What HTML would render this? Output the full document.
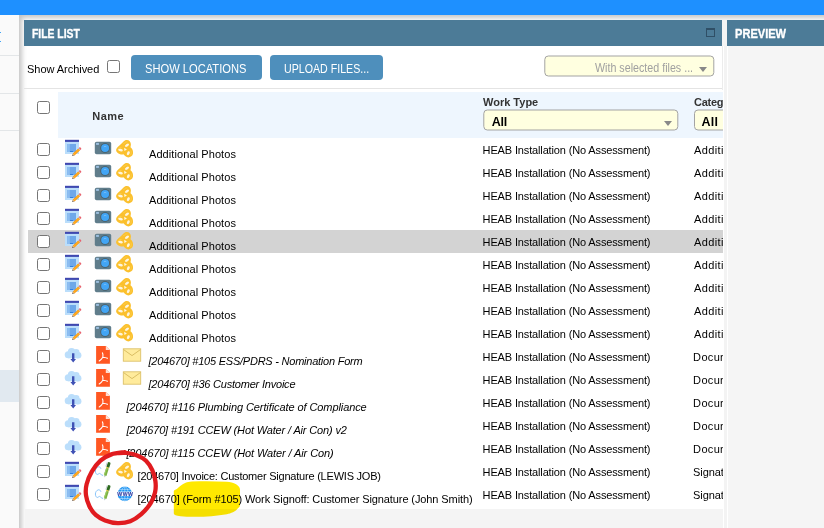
<!DOCTYPE html>
<html lang="en"><head><meta charset="utf-8"><title>File List</title>
<style>
html,body{margin:0;padding:0}
body{width:824px;height:528px;overflow:hidden;position:relative;background:#fff;font-family:"Liberation Sans",sans-serif;color:#000}
.abs{position:absolute}
.t{position:absolute;white-space:nowrap;display:block}
.ic{position:absolute;overflow:visible}
#topbar{left:0;top:0;width:824px;height:15px;background:#1e90ff}
#side{left:0;top:15px;width:19px;height:513px;background:#fafafa}
#side .ln{position:absolute;left:0;width:19px;height:1px;background:#e3e6e8}
#side .hi{position:absolute;left:0;top:355px;width:19px;height:32px;background:#e1e9f0}
#main{left:19px;top:15px;width:805px;height:513px;background:#fff;box-shadow:inset 4px 4px 5px -1px #c6c6c6}
.hdr{background:#4c7b97;height:26px;top:20px}
#p1h{left:24px;width:698px}
#p2h{left:727px;width:97px}
#p2b{left:728px;top:46px;width:96px;height:482px;background:#f5f5f5}
#gut{left:724px;top:46px;width:3px;height:482px;background:#f3f3f3}
#gut2{left:722px;top:20px;width:5px;height:26px;background:#f4f4f4}
#gutl{left:722px;top:46px;width:1px;height:44px;background:#ececec}
#sep{left:24px;top:88px;width:698px;height:1px;background:#e4e4e4}
#thbg{left:58px;top:92px;width:665px;height:46px;background:#eef6fe}
#below{left:25px;top:509px;width:698px;height:19px;background:#f4f4f4}
#clip{left:28px;top:90px;width:695px;height:419px;overflow:hidden}
#clip>*{margin-left:-28px;margin-top:-90px}
.cb{position:absolute;width:11px;height:11px;border:1px solid #767676;border-radius:2.5px;background:#fff}
.btn{position:absolute;top:55px;height:25px;background:#4e8fbc;border-radius:4px}
.sel{position:absolute;background:#ffffe0;border:1px solid #a3a3a3;border-radius:4px;box-sizing:border-box}
.arr{position:absolute;width:0;height:0;border-left:4px solid transparent;border-right:4px solid transparent;border-top:5px solid #888}
#hl{left:28px;top:230px;width:695px;height:23px;background:#d3d3d3}
</style></head><body>


<div id="topbar" class="abs"></div>
<div id="side" class="abs"><div class="ln" style="top:40px"></div><div class="ln" style="top:78px"></div><div class="ln" style="top:115px"></div><div class="hi"></div><div style="position:absolute;left:0;top:17px;width:1.2px;height:1.2px;background:#42a5f5"></div><div style="position:absolute;left:0;top:26px;width:1.2px;height:1.2px;background:#42a5f5"></div></div>
<div id="main" class="abs"></div>
<div id="p1h" class="abs hdr"></div><div id="p2h" class="abs hdr"></div><div id="p2b" class="abs"></div><div id="gut" class="abs"></div><div id="gut2" class="abs"></div><div id="gutl" class="abs"></div>
<svg class="ic" style="left:706px;top:28px" width="9" height="9" viewBox="0 0 9 9"><rect x="0.5" y="1" width="8" height="7.5" fill="none" stroke="#2f4f66" stroke-width="1"/><rect x="0" y="0" width="9" height="2" fill="#2f4f66"/></svg>
<div id="sep" class="abs"></div><div id="below" class="abs"></div>
<div class="cb" style="left:107px;top:60px"></div>
<div class="btn" style="left:131px;width:131px"></div><div class="btn" style="left:270px;width:113px"></div>
<div class="sel" style="left:544px;top:55px;width:169.5px;height:21px;transform:translate(0.3px,0.5px)"></div><div class="arr" style="left:699px;top:67px"></div>
<div id="clip" class="abs"><div style="position:absolute;left:0;top:0">
<div id="thbg" class="abs"></div><div id="hl" class="abs"></div>
<div class="cb" style="left:37px;top:101px"></div>
<div class="sel" style="left:483px;top:109px;width:195.2px;height:21px;transform:translate(0.3px,0.5px)"></div><div class="arr" style="left:664px;top:121px"></div>
<div class="sel" style="left:694px;top:109px;width:120px;height:21px;transform:translate(0,0.5px)"></div>
<div class="cb" style="left:37px;top:143px"></div>
<svg class="ic" style="left:65px;top:140px" width="16" height="16" viewBox="0 0 16 16"><rect x="0" y="0" width="14" height="14" fill="#bbdefb"/><rect x="0" y="-0.2" width="14" height="2.1" fill="#3f48b0"/><rect x="2.2" y="4" width="8.8" height="8" fill="#6ea8ea"/><rect x="2.2" y="4" width="2.6" height="8" fill="#8dbdf0"/><rect x="5" y="11" width="3" height="1" fill="#2f7fe0"/><g transform="translate(7.1,16) rotate(-43)"><path d="M0 0 L2.4 -1.3 L2.4 1.3 Z" fill="#5d4a3a"/><path d="M1.4 -0.76 L2.4 -1.3 L2.4 1.3 L1.4 0.76 Z" fill="#f7c98a"/><rect x="2.4" y="-1.3" width="7.3" height="2.6" fill="#ff9800"/><rect x="2.4" y="-0.45" width="7.3" height="0.9" fill="#ffb030"/><rect x="9.7" y="-1.3" width="0.6" height="2.6" fill="#b0bec5"/><path d="M10.3 -1.3 H11 A1 1.3 0 0 1 11 1.3 H10.3 Z" fill="#e8636f"/></g></svg>
<svg class="ic" style="left:95px;top:140px" width="16" height="16" viewBox="0 0 16 16"><rect x="-0.2" y="1.7" width="16.4" height="12.5" rx="1.8" fill="#607d8b"/><rect x="1.1" y="2.9" width="2.8" height="2" fill="#9ec0e0"/><circle cx="10.1" cy="8" r="4.8" fill="#455a64"/><circle cx="10.1" cy="8" r="4" fill="#42a5f5"/><path d="M8.8 6.9 A1.9 1.9 0 0 1 11.4 6.9" fill="none" stroke="#a6d4fa" stroke-width="0.5"/></svg>
<svg class="ic" style="left:117px;top:140px" width="16" height="16" viewBox="0 0 16 16"><path d="M-0.9 10.1 C-0.6 8.6 0 7.6 1 6.75 L4.3 3.8 L6.8 1.3 C7.8 0.4 8.7 0.1 9.75 0.1 C11 0.1 12 0.5 12.7 1.3 C13.5 2.2 13.9 3.2 13.9 4.25 C13.9 5.4 13.7 6.3 13.5 7.2 C14.5 8 15.2 9 15.6 10.1 C16 11.2 16.1 12.3 16 13.4 C15.8 14.6 15.2 15.6 14.3 16.3 C13.4 17 12.5 17.4 11.4 17.4 C10.3 17.4 9.3 17 8.5 16.3 C7.7 15.6 7 15 6.4 14.25 C5.3 14.6 4.2 14.6 3.1 14.25 C1.9 13.9 0.9 13.4 0.2 12.6 C-0.6 11.8 -1 11 -0.9 10.1 Z" fill="#fbc02d"/><g fill="#fff" opacity="0.85"><ellipse cx="10" cy="5.2" rx="2.3" ry="1.25" transform="rotate(-35 10 5.2)"/><ellipse cx="3.5" cy="10.1" rx="2.4" ry="1.3" transform="rotate(12 3.5 10.1)"/><ellipse cx="11.3" cy="13.2" rx="1.3" ry="2.1" transform="rotate(25 11.3 13.2)"/><path d="M7.2 7.8 L9.9 9.5 L7.4 10.9 Z" opacity="1"/></g><g fill="none" stroke="#fdd663" stroke-width="0.6" opacity="0.9"><path d="M6.5 4 C7.5 2.5 9 1.8 10.5 2"/><path d="M0.8 9.5 C1.5 8 3 7.3 4.5 7.5"/><path d="M13.8 10.5 C14.6 12 14.4 14 13.4 15"/></g></svg>
<div class="cb" style="left:37px;top:166px"></div>
<svg class="ic" style="left:65px;top:163px" width="16" height="16" viewBox="0 0 16 16"><rect x="0" y="0" width="14" height="14" fill="#bbdefb"/><rect x="0" y="-0.2" width="14" height="2.1" fill="#3f48b0"/><rect x="2.2" y="4" width="8.8" height="8" fill="#6ea8ea"/><rect x="2.2" y="4" width="2.6" height="8" fill="#8dbdf0"/><rect x="5" y="11" width="3" height="1" fill="#2f7fe0"/><g transform="translate(7.1,16) rotate(-43)"><path d="M0 0 L2.4 -1.3 L2.4 1.3 Z" fill="#5d4a3a"/><path d="M1.4 -0.76 L2.4 -1.3 L2.4 1.3 L1.4 0.76 Z" fill="#f7c98a"/><rect x="2.4" y="-1.3" width="7.3" height="2.6" fill="#ff9800"/><rect x="2.4" y="-0.45" width="7.3" height="0.9" fill="#ffb030"/><rect x="9.7" y="-1.3" width="0.6" height="2.6" fill="#b0bec5"/><path d="M10.3 -1.3 H11 A1 1.3 0 0 1 11 1.3 H10.3 Z" fill="#e8636f"/></g></svg>
<svg class="ic" style="left:95px;top:163px" width="16" height="16" viewBox="0 0 16 16"><rect x="-0.2" y="1.7" width="16.4" height="12.5" rx="1.8" fill="#607d8b"/><rect x="1.1" y="2.9" width="2.8" height="2" fill="#9ec0e0"/><circle cx="10.1" cy="8" r="4.8" fill="#455a64"/><circle cx="10.1" cy="8" r="4" fill="#42a5f5"/><path d="M8.8 6.9 A1.9 1.9 0 0 1 11.4 6.9" fill="none" stroke="#a6d4fa" stroke-width="0.5"/></svg>
<svg class="ic" style="left:117px;top:163px" width="16" height="16" viewBox="0 0 16 16"><path d="M-0.9 10.1 C-0.6 8.6 0 7.6 1 6.75 L4.3 3.8 L6.8 1.3 C7.8 0.4 8.7 0.1 9.75 0.1 C11 0.1 12 0.5 12.7 1.3 C13.5 2.2 13.9 3.2 13.9 4.25 C13.9 5.4 13.7 6.3 13.5 7.2 C14.5 8 15.2 9 15.6 10.1 C16 11.2 16.1 12.3 16 13.4 C15.8 14.6 15.2 15.6 14.3 16.3 C13.4 17 12.5 17.4 11.4 17.4 C10.3 17.4 9.3 17 8.5 16.3 C7.7 15.6 7 15 6.4 14.25 C5.3 14.6 4.2 14.6 3.1 14.25 C1.9 13.9 0.9 13.4 0.2 12.6 C-0.6 11.8 -1 11 -0.9 10.1 Z" fill="#fbc02d"/><g fill="#fff" opacity="0.85"><ellipse cx="10" cy="5.2" rx="2.3" ry="1.25" transform="rotate(-35 10 5.2)"/><ellipse cx="3.5" cy="10.1" rx="2.4" ry="1.3" transform="rotate(12 3.5 10.1)"/><ellipse cx="11.3" cy="13.2" rx="1.3" ry="2.1" transform="rotate(25 11.3 13.2)"/><path d="M7.2 7.8 L9.9 9.5 L7.4 10.9 Z" opacity="1"/></g><g fill="none" stroke="#fdd663" stroke-width="0.6" opacity="0.9"><path d="M6.5 4 C7.5 2.5 9 1.8 10.5 2"/><path d="M0.8 9.5 C1.5 8 3 7.3 4.5 7.5"/><path d="M13.8 10.5 C14.6 12 14.4 14 13.4 15"/></g></svg>
<div class="cb" style="left:37px;top:189px"></div>
<svg class="ic" style="left:65px;top:186px" width="16" height="16" viewBox="0 0 16 16"><rect x="0" y="0" width="14" height="14" fill="#bbdefb"/><rect x="0" y="-0.2" width="14" height="2.1" fill="#3f48b0"/><rect x="2.2" y="4" width="8.8" height="8" fill="#6ea8ea"/><rect x="2.2" y="4" width="2.6" height="8" fill="#8dbdf0"/><rect x="5" y="11" width="3" height="1" fill="#2f7fe0"/><g transform="translate(7.1,16) rotate(-43)"><path d="M0 0 L2.4 -1.3 L2.4 1.3 Z" fill="#5d4a3a"/><path d="M1.4 -0.76 L2.4 -1.3 L2.4 1.3 L1.4 0.76 Z" fill="#f7c98a"/><rect x="2.4" y="-1.3" width="7.3" height="2.6" fill="#ff9800"/><rect x="2.4" y="-0.45" width="7.3" height="0.9" fill="#ffb030"/><rect x="9.7" y="-1.3" width="0.6" height="2.6" fill="#b0bec5"/><path d="M10.3 -1.3 H11 A1 1.3 0 0 1 11 1.3 H10.3 Z" fill="#e8636f"/></g></svg>
<svg class="ic" style="left:95px;top:186px" width="16" height="16" viewBox="0 0 16 16"><rect x="-0.2" y="1.7" width="16.4" height="12.5" rx="1.8" fill="#607d8b"/><rect x="1.1" y="2.9" width="2.8" height="2" fill="#9ec0e0"/><circle cx="10.1" cy="8" r="4.8" fill="#455a64"/><circle cx="10.1" cy="8" r="4" fill="#42a5f5"/><path d="M8.8 6.9 A1.9 1.9 0 0 1 11.4 6.9" fill="none" stroke="#a6d4fa" stroke-width="0.5"/></svg>
<svg class="ic" style="left:117px;top:186px" width="16" height="16" viewBox="0 0 16 16"><path d="M-0.9 10.1 C-0.6 8.6 0 7.6 1 6.75 L4.3 3.8 L6.8 1.3 C7.8 0.4 8.7 0.1 9.75 0.1 C11 0.1 12 0.5 12.7 1.3 C13.5 2.2 13.9 3.2 13.9 4.25 C13.9 5.4 13.7 6.3 13.5 7.2 C14.5 8 15.2 9 15.6 10.1 C16 11.2 16.1 12.3 16 13.4 C15.8 14.6 15.2 15.6 14.3 16.3 C13.4 17 12.5 17.4 11.4 17.4 C10.3 17.4 9.3 17 8.5 16.3 C7.7 15.6 7 15 6.4 14.25 C5.3 14.6 4.2 14.6 3.1 14.25 C1.9 13.9 0.9 13.4 0.2 12.6 C-0.6 11.8 -1 11 -0.9 10.1 Z" fill="#fbc02d"/><g fill="#fff" opacity="0.85"><ellipse cx="10" cy="5.2" rx="2.3" ry="1.25" transform="rotate(-35 10 5.2)"/><ellipse cx="3.5" cy="10.1" rx="2.4" ry="1.3" transform="rotate(12 3.5 10.1)"/><ellipse cx="11.3" cy="13.2" rx="1.3" ry="2.1" transform="rotate(25 11.3 13.2)"/><path d="M7.2 7.8 L9.9 9.5 L7.4 10.9 Z" opacity="1"/></g><g fill="none" stroke="#fdd663" stroke-width="0.6" opacity="0.9"><path d="M6.5 4 C7.5 2.5 9 1.8 10.5 2"/><path d="M0.8 9.5 C1.5 8 3 7.3 4.5 7.5"/><path d="M13.8 10.5 C14.6 12 14.4 14 13.4 15"/></g></svg>
<div class="cb" style="left:37px;top:212px"></div>
<svg class="ic" style="left:65px;top:209px" width="16" height="16" viewBox="0 0 16 16"><rect x="0" y="0" width="14" height="14" fill="#bbdefb"/><rect x="0" y="-0.2" width="14" height="2.1" fill="#3f48b0"/><rect x="2.2" y="4" width="8.8" height="8" fill="#6ea8ea"/><rect x="2.2" y="4" width="2.6" height="8" fill="#8dbdf0"/><rect x="5" y="11" width="3" height="1" fill="#2f7fe0"/><g transform="translate(7.1,16) rotate(-43)"><path d="M0 0 L2.4 -1.3 L2.4 1.3 Z" fill="#5d4a3a"/><path d="M1.4 -0.76 L2.4 -1.3 L2.4 1.3 L1.4 0.76 Z" fill="#f7c98a"/><rect x="2.4" y="-1.3" width="7.3" height="2.6" fill="#ff9800"/><rect x="2.4" y="-0.45" width="7.3" height="0.9" fill="#ffb030"/><rect x="9.7" y="-1.3" width="0.6" height="2.6" fill="#b0bec5"/><path d="M10.3 -1.3 H11 A1 1.3 0 0 1 11 1.3 H10.3 Z" fill="#e8636f"/></g></svg>
<svg class="ic" style="left:95px;top:209px" width="16" height="16" viewBox="0 0 16 16"><rect x="-0.2" y="1.7" width="16.4" height="12.5" rx="1.8" fill="#607d8b"/><rect x="1.1" y="2.9" width="2.8" height="2" fill="#9ec0e0"/><circle cx="10.1" cy="8" r="4.8" fill="#455a64"/><circle cx="10.1" cy="8" r="4" fill="#42a5f5"/><path d="M8.8 6.9 A1.9 1.9 0 0 1 11.4 6.9" fill="none" stroke="#a6d4fa" stroke-width="0.5"/></svg>
<svg class="ic" style="left:117px;top:209px" width="16" height="16" viewBox="0 0 16 16"><path d="M-0.9 10.1 C-0.6 8.6 0 7.6 1 6.75 L4.3 3.8 L6.8 1.3 C7.8 0.4 8.7 0.1 9.75 0.1 C11 0.1 12 0.5 12.7 1.3 C13.5 2.2 13.9 3.2 13.9 4.25 C13.9 5.4 13.7 6.3 13.5 7.2 C14.5 8 15.2 9 15.6 10.1 C16 11.2 16.1 12.3 16 13.4 C15.8 14.6 15.2 15.6 14.3 16.3 C13.4 17 12.5 17.4 11.4 17.4 C10.3 17.4 9.3 17 8.5 16.3 C7.7 15.6 7 15 6.4 14.25 C5.3 14.6 4.2 14.6 3.1 14.25 C1.9 13.9 0.9 13.4 0.2 12.6 C-0.6 11.8 -1 11 -0.9 10.1 Z" fill="#fbc02d"/><g fill="#fff" opacity="0.85"><ellipse cx="10" cy="5.2" rx="2.3" ry="1.25" transform="rotate(-35 10 5.2)"/><ellipse cx="3.5" cy="10.1" rx="2.4" ry="1.3" transform="rotate(12 3.5 10.1)"/><ellipse cx="11.3" cy="13.2" rx="1.3" ry="2.1" transform="rotate(25 11.3 13.2)"/><path d="M7.2 7.8 L9.9 9.5 L7.4 10.9 Z" opacity="1"/></g><g fill="none" stroke="#fdd663" stroke-width="0.6" opacity="0.9"><path d="M6.5 4 C7.5 2.5 9 1.8 10.5 2"/><path d="M0.8 9.5 C1.5 8 3 7.3 4.5 7.5"/><path d="M13.8 10.5 C14.6 12 14.4 14 13.4 15"/></g></svg>
<div class="cb" style="left:37px;top:235px"></div>
<svg class="ic" style="left:65px;top:232px" width="16" height="16" viewBox="0 0 16 16"><rect x="0" y="0" width="14" height="14" fill="#bbdefb"/><rect x="0" y="-0.2" width="14" height="2.1" fill="#3f48b0"/><rect x="2.2" y="4" width="8.8" height="8" fill="#6ea8ea"/><rect x="2.2" y="4" width="2.6" height="8" fill="#8dbdf0"/><rect x="5" y="11" width="3" height="1" fill="#2f7fe0"/><g transform="translate(7.1,16) rotate(-43)"><path d="M0 0 L2.4 -1.3 L2.4 1.3 Z" fill="#5d4a3a"/><path d="M1.4 -0.76 L2.4 -1.3 L2.4 1.3 L1.4 0.76 Z" fill="#f7c98a"/><rect x="2.4" y="-1.3" width="7.3" height="2.6" fill="#ff9800"/><rect x="2.4" y="-0.45" width="7.3" height="0.9" fill="#ffb030"/><rect x="9.7" y="-1.3" width="0.6" height="2.6" fill="#b0bec5"/><path d="M10.3 -1.3 H11 A1 1.3 0 0 1 11 1.3 H10.3 Z" fill="#e8636f"/></g></svg>
<svg class="ic" style="left:95px;top:232px" width="16" height="16" viewBox="0 0 16 16"><rect x="-0.2" y="1.7" width="16.4" height="12.5" rx="1.8" fill="#607d8b"/><rect x="1.1" y="2.9" width="2.8" height="2" fill="#9ec0e0"/><circle cx="10.1" cy="8" r="4.8" fill="#455a64"/><circle cx="10.1" cy="8" r="4" fill="#42a5f5"/><path d="M8.8 6.9 A1.9 1.9 0 0 1 11.4 6.9" fill="none" stroke="#a6d4fa" stroke-width="0.5"/></svg>
<svg class="ic" style="left:117px;top:232px" width="16" height="16" viewBox="0 0 16 16"><path d="M-0.9 10.1 C-0.6 8.6 0 7.6 1 6.75 L4.3 3.8 L6.8 1.3 C7.8 0.4 8.7 0.1 9.75 0.1 C11 0.1 12 0.5 12.7 1.3 C13.5 2.2 13.9 3.2 13.9 4.25 C13.9 5.4 13.7 6.3 13.5 7.2 C14.5 8 15.2 9 15.6 10.1 C16 11.2 16.1 12.3 16 13.4 C15.8 14.6 15.2 15.6 14.3 16.3 C13.4 17 12.5 17.4 11.4 17.4 C10.3 17.4 9.3 17 8.5 16.3 C7.7 15.6 7 15 6.4 14.25 C5.3 14.6 4.2 14.6 3.1 14.25 C1.9 13.9 0.9 13.4 0.2 12.6 C-0.6 11.8 -1 11 -0.9 10.1 Z" fill="#fbc02d"/><g fill="#fff" opacity="0.85"><ellipse cx="10" cy="5.2" rx="2.3" ry="1.25" transform="rotate(-35 10 5.2)"/><ellipse cx="3.5" cy="10.1" rx="2.4" ry="1.3" transform="rotate(12 3.5 10.1)"/><ellipse cx="11.3" cy="13.2" rx="1.3" ry="2.1" transform="rotate(25 11.3 13.2)"/><path d="M7.2 7.8 L9.9 9.5 L7.4 10.9 Z" opacity="1"/></g><g fill="none" stroke="#fdd663" stroke-width="0.6" opacity="0.9"><path d="M6.5 4 C7.5 2.5 9 1.8 10.5 2"/><path d="M0.8 9.5 C1.5 8 3 7.3 4.5 7.5"/><path d="M13.8 10.5 C14.6 12 14.4 14 13.4 15"/></g></svg>
<div class="cb" style="left:37px;top:258px"></div>
<svg class="ic" style="left:65px;top:255px" width="16" height="16" viewBox="0 0 16 16"><rect x="0" y="0" width="14" height="14" fill="#bbdefb"/><rect x="0" y="-0.2" width="14" height="2.1" fill="#3f48b0"/><rect x="2.2" y="4" width="8.8" height="8" fill="#6ea8ea"/><rect x="2.2" y="4" width="2.6" height="8" fill="#8dbdf0"/><rect x="5" y="11" width="3" height="1" fill="#2f7fe0"/><g transform="translate(7.1,16) rotate(-43)"><path d="M0 0 L2.4 -1.3 L2.4 1.3 Z" fill="#5d4a3a"/><path d="M1.4 -0.76 L2.4 -1.3 L2.4 1.3 L1.4 0.76 Z" fill="#f7c98a"/><rect x="2.4" y="-1.3" width="7.3" height="2.6" fill="#ff9800"/><rect x="2.4" y="-0.45" width="7.3" height="0.9" fill="#ffb030"/><rect x="9.7" y="-1.3" width="0.6" height="2.6" fill="#b0bec5"/><path d="M10.3 -1.3 H11 A1 1.3 0 0 1 11 1.3 H10.3 Z" fill="#e8636f"/></g></svg>
<svg class="ic" style="left:95px;top:255px" width="16" height="16" viewBox="0 0 16 16"><rect x="-0.2" y="1.7" width="16.4" height="12.5" rx="1.8" fill="#607d8b"/><rect x="1.1" y="2.9" width="2.8" height="2" fill="#9ec0e0"/><circle cx="10.1" cy="8" r="4.8" fill="#455a64"/><circle cx="10.1" cy="8" r="4" fill="#42a5f5"/><path d="M8.8 6.9 A1.9 1.9 0 0 1 11.4 6.9" fill="none" stroke="#a6d4fa" stroke-width="0.5"/></svg>
<svg class="ic" style="left:117px;top:255px" width="16" height="16" viewBox="0 0 16 16"><path d="M-0.9 10.1 C-0.6 8.6 0 7.6 1 6.75 L4.3 3.8 L6.8 1.3 C7.8 0.4 8.7 0.1 9.75 0.1 C11 0.1 12 0.5 12.7 1.3 C13.5 2.2 13.9 3.2 13.9 4.25 C13.9 5.4 13.7 6.3 13.5 7.2 C14.5 8 15.2 9 15.6 10.1 C16 11.2 16.1 12.3 16 13.4 C15.8 14.6 15.2 15.6 14.3 16.3 C13.4 17 12.5 17.4 11.4 17.4 C10.3 17.4 9.3 17 8.5 16.3 C7.7 15.6 7 15 6.4 14.25 C5.3 14.6 4.2 14.6 3.1 14.25 C1.9 13.9 0.9 13.4 0.2 12.6 C-0.6 11.8 -1 11 -0.9 10.1 Z" fill="#fbc02d"/><g fill="#fff" opacity="0.85"><ellipse cx="10" cy="5.2" rx="2.3" ry="1.25" transform="rotate(-35 10 5.2)"/><ellipse cx="3.5" cy="10.1" rx="2.4" ry="1.3" transform="rotate(12 3.5 10.1)"/><ellipse cx="11.3" cy="13.2" rx="1.3" ry="2.1" transform="rotate(25 11.3 13.2)"/><path d="M7.2 7.8 L9.9 9.5 L7.4 10.9 Z" opacity="1"/></g><g fill="none" stroke="#fdd663" stroke-width="0.6" opacity="0.9"><path d="M6.5 4 C7.5 2.5 9 1.8 10.5 2"/><path d="M0.8 9.5 C1.5 8 3 7.3 4.5 7.5"/><path d="M13.8 10.5 C14.6 12 14.4 14 13.4 15"/></g></svg>
<div class="cb" style="left:37px;top:281px"></div>
<svg class="ic" style="left:65px;top:278px" width="16" height="16" viewBox="0 0 16 16"><rect x="0" y="0" width="14" height="14" fill="#bbdefb"/><rect x="0" y="-0.2" width="14" height="2.1" fill="#3f48b0"/><rect x="2.2" y="4" width="8.8" height="8" fill="#6ea8ea"/><rect x="2.2" y="4" width="2.6" height="8" fill="#8dbdf0"/><rect x="5" y="11" width="3" height="1" fill="#2f7fe0"/><g transform="translate(7.1,16) rotate(-43)"><path d="M0 0 L2.4 -1.3 L2.4 1.3 Z" fill="#5d4a3a"/><path d="M1.4 -0.76 L2.4 -1.3 L2.4 1.3 L1.4 0.76 Z" fill="#f7c98a"/><rect x="2.4" y="-1.3" width="7.3" height="2.6" fill="#ff9800"/><rect x="2.4" y="-0.45" width="7.3" height="0.9" fill="#ffb030"/><rect x="9.7" y="-1.3" width="0.6" height="2.6" fill="#b0bec5"/><path d="M10.3 -1.3 H11 A1 1.3 0 0 1 11 1.3 H10.3 Z" fill="#e8636f"/></g></svg>
<svg class="ic" style="left:95px;top:278px" width="16" height="16" viewBox="0 0 16 16"><rect x="-0.2" y="1.7" width="16.4" height="12.5" rx="1.8" fill="#607d8b"/><rect x="1.1" y="2.9" width="2.8" height="2" fill="#9ec0e0"/><circle cx="10.1" cy="8" r="4.8" fill="#455a64"/><circle cx="10.1" cy="8" r="4" fill="#42a5f5"/><path d="M8.8 6.9 A1.9 1.9 0 0 1 11.4 6.9" fill="none" stroke="#a6d4fa" stroke-width="0.5"/></svg>
<svg class="ic" style="left:117px;top:278px" width="16" height="16" viewBox="0 0 16 16"><path d="M-0.9 10.1 C-0.6 8.6 0 7.6 1 6.75 L4.3 3.8 L6.8 1.3 C7.8 0.4 8.7 0.1 9.75 0.1 C11 0.1 12 0.5 12.7 1.3 C13.5 2.2 13.9 3.2 13.9 4.25 C13.9 5.4 13.7 6.3 13.5 7.2 C14.5 8 15.2 9 15.6 10.1 C16 11.2 16.1 12.3 16 13.4 C15.8 14.6 15.2 15.6 14.3 16.3 C13.4 17 12.5 17.4 11.4 17.4 C10.3 17.4 9.3 17 8.5 16.3 C7.7 15.6 7 15 6.4 14.25 C5.3 14.6 4.2 14.6 3.1 14.25 C1.9 13.9 0.9 13.4 0.2 12.6 C-0.6 11.8 -1 11 -0.9 10.1 Z" fill="#fbc02d"/><g fill="#fff" opacity="0.85"><ellipse cx="10" cy="5.2" rx="2.3" ry="1.25" transform="rotate(-35 10 5.2)"/><ellipse cx="3.5" cy="10.1" rx="2.4" ry="1.3" transform="rotate(12 3.5 10.1)"/><ellipse cx="11.3" cy="13.2" rx="1.3" ry="2.1" transform="rotate(25 11.3 13.2)"/><path d="M7.2 7.8 L9.9 9.5 L7.4 10.9 Z" opacity="1"/></g><g fill="none" stroke="#fdd663" stroke-width="0.6" opacity="0.9"><path d="M6.5 4 C7.5 2.5 9 1.8 10.5 2"/><path d="M0.8 9.5 C1.5 8 3 7.3 4.5 7.5"/><path d="M13.8 10.5 C14.6 12 14.4 14 13.4 15"/></g></svg>
<div class="cb" style="left:37px;top:304px"></div>
<svg class="ic" style="left:65px;top:301px" width="16" height="16" viewBox="0 0 16 16"><rect x="0" y="0" width="14" height="14" fill="#bbdefb"/><rect x="0" y="-0.2" width="14" height="2.1" fill="#3f48b0"/><rect x="2.2" y="4" width="8.8" height="8" fill="#6ea8ea"/><rect x="2.2" y="4" width="2.6" height="8" fill="#8dbdf0"/><rect x="5" y="11" width="3" height="1" fill="#2f7fe0"/><g transform="translate(7.1,16) rotate(-43)"><path d="M0 0 L2.4 -1.3 L2.4 1.3 Z" fill="#5d4a3a"/><path d="M1.4 -0.76 L2.4 -1.3 L2.4 1.3 L1.4 0.76 Z" fill="#f7c98a"/><rect x="2.4" y="-1.3" width="7.3" height="2.6" fill="#ff9800"/><rect x="2.4" y="-0.45" width="7.3" height="0.9" fill="#ffb030"/><rect x="9.7" y="-1.3" width="0.6" height="2.6" fill="#b0bec5"/><path d="M10.3 -1.3 H11 A1 1.3 0 0 1 11 1.3 H10.3 Z" fill="#e8636f"/></g></svg>
<svg class="ic" style="left:95px;top:301px" width="16" height="16" viewBox="0 0 16 16"><rect x="-0.2" y="1.7" width="16.4" height="12.5" rx="1.8" fill="#607d8b"/><rect x="1.1" y="2.9" width="2.8" height="2" fill="#9ec0e0"/><circle cx="10.1" cy="8" r="4.8" fill="#455a64"/><circle cx="10.1" cy="8" r="4" fill="#42a5f5"/><path d="M8.8 6.9 A1.9 1.9 0 0 1 11.4 6.9" fill="none" stroke="#a6d4fa" stroke-width="0.5"/></svg>
<svg class="ic" style="left:117px;top:301px" width="16" height="16" viewBox="0 0 16 16"><path d="M-0.9 10.1 C-0.6 8.6 0 7.6 1 6.75 L4.3 3.8 L6.8 1.3 C7.8 0.4 8.7 0.1 9.75 0.1 C11 0.1 12 0.5 12.7 1.3 C13.5 2.2 13.9 3.2 13.9 4.25 C13.9 5.4 13.7 6.3 13.5 7.2 C14.5 8 15.2 9 15.6 10.1 C16 11.2 16.1 12.3 16 13.4 C15.8 14.6 15.2 15.6 14.3 16.3 C13.4 17 12.5 17.4 11.4 17.4 C10.3 17.4 9.3 17 8.5 16.3 C7.7 15.6 7 15 6.4 14.25 C5.3 14.6 4.2 14.6 3.1 14.25 C1.9 13.9 0.9 13.4 0.2 12.6 C-0.6 11.8 -1 11 -0.9 10.1 Z" fill="#fbc02d"/><g fill="#fff" opacity="0.85"><ellipse cx="10" cy="5.2" rx="2.3" ry="1.25" transform="rotate(-35 10 5.2)"/><ellipse cx="3.5" cy="10.1" rx="2.4" ry="1.3" transform="rotate(12 3.5 10.1)"/><ellipse cx="11.3" cy="13.2" rx="1.3" ry="2.1" transform="rotate(25 11.3 13.2)"/><path d="M7.2 7.8 L9.9 9.5 L7.4 10.9 Z" opacity="1"/></g><g fill="none" stroke="#fdd663" stroke-width="0.6" opacity="0.9"><path d="M6.5 4 C7.5 2.5 9 1.8 10.5 2"/><path d="M0.8 9.5 C1.5 8 3 7.3 4.5 7.5"/><path d="M13.8 10.5 C14.6 12 14.4 14 13.4 15"/></g></svg>
<div class="cb" style="left:37px;top:327px"></div>
<svg class="ic" style="left:65px;top:324px" width="16" height="16" viewBox="0 0 16 16"><rect x="0" y="0" width="14" height="14" fill="#bbdefb"/><rect x="0" y="-0.2" width="14" height="2.1" fill="#3f48b0"/><rect x="2.2" y="4" width="8.8" height="8" fill="#6ea8ea"/><rect x="2.2" y="4" width="2.6" height="8" fill="#8dbdf0"/><rect x="5" y="11" width="3" height="1" fill="#2f7fe0"/><g transform="translate(7.1,16) rotate(-43)"><path d="M0 0 L2.4 -1.3 L2.4 1.3 Z" fill="#5d4a3a"/><path d="M1.4 -0.76 L2.4 -1.3 L2.4 1.3 L1.4 0.76 Z" fill="#f7c98a"/><rect x="2.4" y="-1.3" width="7.3" height="2.6" fill="#ff9800"/><rect x="2.4" y="-0.45" width="7.3" height="0.9" fill="#ffb030"/><rect x="9.7" y="-1.3" width="0.6" height="2.6" fill="#b0bec5"/><path d="M10.3 -1.3 H11 A1 1.3 0 0 1 11 1.3 H10.3 Z" fill="#e8636f"/></g></svg>
<svg class="ic" style="left:95px;top:324px" width="16" height="16" viewBox="0 0 16 16"><rect x="-0.2" y="1.7" width="16.4" height="12.5" rx="1.8" fill="#607d8b"/><rect x="1.1" y="2.9" width="2.8" height="2" fill="#9ec0e0"/><circle cx="10.1" cy="8" r="4.8" fill="#455a64"/><circle cx="10.1" cy="8" r="4" fill="#42a5f5"/><path d="M8.8 6.9 A1.9 1.9 0 0 1 11.4 6.9" fill="none" stroke="#a6d4fa" stroke-width="0.5"/></svg>
<svg class="ic" style="left:117px;top:324px" width="16" height="16" viewBox="0 0 16 16"><path d="M-0.9 10.1 C-0.6 8.6 0 7.6 1 6.75 L4.3 3.8 L6.8 1.3 C7.8 0.4 8.7 0.1 9.75 0.1 C11 0.1 12 0.5 12.7 1.3 C13.5 2.2 13.9 3.2 13.9 4.25 C13.9 5.4 13.7 6.3 13.5 7.2 C14.5 8 15.2 9 15.6 10.1 C16 11.2 16.1 12.3 16 13.4 C15.8 14.6 15.2 15.6 14.3 16.3 C13.4 17 12.5 17.4 11.4 17.4 C10.3 17.4 9.3 17 8.5 16.3 C7.7 15.6 7 15 6.4 14.25 C5.3 14.6 4.2 14.6 3.1 14.25 C1.9 13.9 0.9 13.4 0.2 12.6 C-0.6 11.8 -1 11 -0.9 10.1 Z" fill="#fbc02d"/><g fill="#fff" opacity="0.85"><ellipse cx="10" cy="5.2" rx="2.3" ry="1.25" transform="rotate(-35 10 5.2)"/><ellipse cx="3.5" cy="10.1" rx="2.4" ry="1.3" transform="rotate(12 3.5 10.1)"/><ellipse cx="11.3" cy="13.2" rx="1.3" ry="2.1" transform="rotate(25 11.3 13.2)"/><path d="M7.2 7.8 L9.9 9.5 L7.4 10.9 Z" opacity="1"/></g><g fill="none" stroke="#fdd663" stroke-width="0.6" opacity="0.9"><path d="M6.5 4 C7.5 2.5 9 1.8 10.5 2"/><path d="M0.8 9.5 C1.5 8 3 7.3 4.5 7.5"/><path d="M13.8 10.5 C14.6 12 14.4 14 13.4 15"/></g></svg>
<div class="cb" style="left:37px;top:350px"></div>
<svg class="ic" style="left:65px;top:347px" width="16" height="16" viewBox="0 0 16 16"><g fill="#bbdefb"><circle cx="3.2" cy="7.8" r="3.5"/><circle cx="6.6" cy="4.8" r="3.8"/><circle cx="11.2" cy="5.4" r="3.3"/><circle cx="13.2" cy="8.2" r="3.2"/><rect x="3.2" y="6" width="10" height="5.3"/></g><path d="M7 6.2 H9.4 V12 H11 L8.2 15.4 L5.4 12 H7 Z" fill="#3f51b5"/></svg>
<svg class="ic" style="left:96px;top:346px" width="14" height="18" viewBox="0 0 14 18"><path d="M0.1 0 H9.8 L13.9 4.1 V17.7 H0.1 Z" fill="#ff5722"/><path d="M9.8 0 L13.9 4.1 H9.8 Z" fill="#ffddd2"/><path d="M6.4 6.9 C7.4 8.5 6.9 10 6.8 11.2 M6.8 11.2 C6 12.6 4.8 14 3.2 14.9 M6.8 11.2 C8.5 11.3 10 11.5 11.4 12.3" fill="none" stroke="#fff" stroke-width="1.1" stroke-linecap="round"/></svg>
<svg class="ic" style="left:122px;top:348px" width="20" height="14" viewBox="0 0 20 14"><rect x="1.3" y="0.8" width="17.4" height="12.4" fill="#ffeb9c" stroke="#dcc06a" stroke-width="0.9"/><path d="M1.6 1.6 L10 7.6 L18.4 1.6" fill="none" stroke="#d6b95e" stroke-width="0.9"/></svg>
<div class="cb" style="left:37px;top:373px"></div>
<svg class="ic" style="left:65px;top:370px" width="16" height="16" viewBox="0 0 16 16"><g fill="#bbdefb"><circle cx="3.2" cy="7.8" r="3.5"/><circle cx="6.6" cy="4.8" r="3.8"/><circle cx="11.2" cy="5.4" r="3.3"/><circle cx="13.2" cy="8.2" r="3.2"/><rect x="3.2" y="6" width="10" height="5.3"/></g><path d="M7 6.2 H9.4 V12 H11 L8.2 15.4 L5.4 12 H7 Z" fill="#3f51b5"/></svg>
<svg class="ic" style="left:96px;top:369px" width="14" height="18" viewBox="0 0 14 18"><path d="M0.1 0 H9.8 L13.9 4.1 V17.7 H0.1 Z" fill="#ff5722"/><path d="M9.8 0 L13.9 4.1 H9.8 Z" fill="#ffddd2"/><path d="M6.4 6.9 C7.4 8.5 6.9 10 6.8 11.2 M6.8 11.2 C6 12.6 4.8 14 3.2 14.9 M6.8 11.2 C8.5 11.3 10 11.5 11.4 12.3" fill="none" stroke="#fff" stroke-width="1.1" stroke-linecap="round"/></svg>
<svg class="ic" style="left:122px;top:371px" width="20" height="14" viewBox="0 0 20 14"><rect x="1.3" y="0.8" width="17.4" height="12.4" fill="#ffeb9c" stroke="#dcc06a" stroke-width="0.9"/><path d="M1.6 1.6 L10 7.6 L18.4 1.6" fill="none" stroke="#d6b95e" stroke-width="0.9"/></svg>
<div class="cb" style="left:37px;top:396px"></div>
<svg class="ic" style="left:65px;top:393px" width="16" height="16" viewBox="0 0 16 16"><g fill="#bbdefb"><circle cx="3.2" cy="7.8" r="3.5"/><circle cx="6.6" cy="4.8" r="3.8"/><circle cx="11.2" cy="5.4" r="3.3"/><circle cx="13.2" cy="8.2" r="3.2"/><rect x="3.2" y="6" width="10" height="5.3"/></g><path d="M7 6.2 H9.4 V12 H11 L8.2 15.4 L5.4 12 H7 Z" fill="#3f51b5"/></svg>
<svg class="ic" style="left:96px;top:392px" width="14" height="18" viewBox="0 0 14 18"><path d="M0.1 0 H9.8 L13.9 4.1 V17.7 H0.1 Z" fill="#ff5722"/><path d="M9.8 0 L13.9 4.1 H9.8 Z" fill="#ffddd2"/><path d="M6.4 6.9 C7.4 8.5 6.9 10 6.8 11.2 M6.8 11.2 C6 12.6 4.8 14 3.2 14.9 M6.8 11.2 C8.5 11.3 10 11.5 11.4 12.3" fill="none" stroke="#fff" stroke-width="1.1" stroke-linecap="round"/></svg>
<div class="cb" style="left:37px;top:419px"></div>
<svg class="ic" style="left:65px;top:416px" width="16" height="16" viewBox="0 0 16 16"><g fill="#bbdefb"><circle cx="3.2" cy="7.8" r="3.5"/><circle cx="6.6" cy="4.8" r="3.8"/><circle cx="11.2" cy="5.4" r="3.3"/><circle cx="13.2" cy="8.2" r="3.2"/><rect x="3.2" y="6" width="10" height="5.3"/></g><path d="M7 6.2 H9.4 V12 H11 L8.2 15.4 L5.4 12 H7 Z" fill="#3f51b5"/></svg>
<svg class="ic" style="left:96px;top:415px" width="14" height="18" viewBox="0 0 14 18"><path d="M0.1 0 H9.8 L13.9 4.1 V17.7 H0.1 Z" fill="#ff5722"/><path d="M9.8 0 L13.9 4.1 H9.8 Z" fill="#ffddd2"/><path d="M6.4 6.9 C7.4 8.5 6.9 10 6.8 11.2 M6.8 11.2 C6 12.6 4.8 14 3.2 14.9 M6.8 11.2 C8.5 11.3 10 11.5 11.4 12.3" fill="none" stroke="#fff" stroke-width="1.1" stroke-linecap="round"/></svg>
<div class="cb" style="left:37px;top:442px"></div>
<svg class="ic" style="left:65px;top:439px" width="16" height="16" viewBox="0 0 16 16"><g fill="#bbdefb"><circle cx="3.2" cy="7.8" r="3.5"/><circle cx="6.6" cy="4.8" r="3.8"/><circle cx="11.2" cy="5.4" r="3.3"/><circle cx="13.2" cy="8.2" r="3.2"/><rect x="3.2" y="6" width="10" height="5.3"/></g><path d="M7 6.2 H9.4 V12 H11 L8.2 15.4 L5.4 12 H7 Z" fill="#3f51b5"/></svg>
<svg class="ic" style="left:96px;top:438px" width="14" height="18" viewBox="0 0 14 18"><path d="M0.1 0 H9.8 L13.9 4.1 V17.7 H0.1 Z" fill="#ff5722"/><path d="M9.8 0 L13.9 4.1 H9.8 Z" fill="#ffddd2"/><path d="M6.4 6.9 C7.4 8.5 6.9 10 6.8 11.2 M6.8 11.2 C6 12.6 4.8 14 3.2 14.9 M6.8 11.2 C8.5 11.3 10 11.5 11.4 12.3" fill="none" stroke="#fff" stroke-width="1.1" stroke-linecap="round"/></svg>
<div class="cb" style="left:37px;top:465px"></div>
<svg class="ic" style="left:65px;top:462px" width="16" height="16" viewBox="0 0 16 16"><rect x="0" y="0" width="14" height="14" fill="#bbdefb"/><rect x="0" y="-0.2" width="14" height="2.1" fill="#3f48b0"/><rect x="2.2" y="4" width="8.8" height="8" fill="#6ea8ea"/><rect x="2.2" y="4" width="2.6" height="8" fill="#8dbdf0"/><rect x="5" y="11" width="3" height="1" fill="#2f7fe0"/><g transform="translate(7.1,16) rotate(-43)"><path d="M0 0 L2.4 -1.3 L2.4 1.3 Z" fill="#5d4a3a"/><path d="M1.4 -0.76 L2.4 -1.3 L2.4 1.3 L1.4 0.76 Z" fill="#f7c98a"/><rect x="2.4" y="-1.3" width="7.3" height="2.6" fill="#ff9800"/><rect x="2.4" y="-0.45" width="7.3" height="0.9" fill="#ffb030"/><rect x="9.7" y="-1.3" width="0.6" height="2.6" fill="#b0bec5"/><path d="M10.3 -1.3 H11 A1 1.3 0 0 1 11 1.3 H10.3 Z" fill="#e8636f"/></g></svg>
<svg class="ic" style="left:95px;top:462px" width="16" height="16" viewBox="0 0 16 16"><path d="M5.8 6.4 C5.4 5.2 4.4 4.6 3.4 4.8 C1.6 5.2 0.4 7.2 0.4 9 C0.4 10.8 1.2 12.4 2.3 12.5 C3.3 12.6 3.6 11.3 4.5 11.4 C5.4 11.5 5.6 12.6 7.7 13.4" fill="none" stroke="#7dbdf8" stroke-width="0.9" stroke-linecap="round"/><g transform="translate(9.5,15.5) rotate(-72.1)"><path d="M0 0 L2.2 -0.7 L2.2 0.7 Z" fill="#90a4ae"/><rect x="2.1" y="-1.35" width="7.7" height="2.7" fill="#7cb342"/><rect x="2.1" y="-1.35" width="7.7" height="1" fill="#9ccc65"/><rect x="9.8" y="-1.45" width="1" height="2.9" fill="#e6c62f"/><path d="M10.8 -1.45 H14.9 A1.2 1.45 0 0 1 14.9 1.45 H10.8 Z" fill="#2e6b1e"/><path d="M10.9 -2.1 H15.2" stroke="#b0bec5" stroke-width="0.7"/></g></svg>
<svg class="ic" style="left:117px;top:462px" width="16" height="16" viewBox="0 0 16 16"><path d="M-0.9 10.1 C-0.6 8.6 0 7.6 1 6.75 L4.3 3.8 L6.8 1.3 C7.8 0.4 8.7 0.1 9.75 0.1 C11 0.1 12 0.5 12.7 1.3 C13.5 2.2 13.9 3.2 13.9 4.25 C13.9 5.4 13.7 6.3 13.5 7.2 C14.5 8 15.2 9 15.6 10.1 C16 11.2 16.1 12.3 16 13.4 C15.8 14.6 15.2 15.6 14.3 16.3 C13.4 17 12.5 17.4 11.4 17.4 C10.3 17.4 9.3 17 8.5 16.3 C7.7 15.6 7 15 6.4 14.25 C5.3 14.6 4.2 14.6 3.1 14.25 C1.9 13.9 0.9 13.4 0.2 12.6 C-0.6 11.8 -1 11 -0.9 10.1 Z" fill="#fbc02d"/><g fill="#fff" opacity="0.85"><ellipse cx="10" cy="5.2" rx="2.3" ry="1.25" transform="rotate(-35 10 5.2)"/><ellipse cx="3.5" cy="10.1" rx="2.4" ry="1.3" transform="rotate(12 3.5 10.1)"/><ellipse cx="11.3" cy="13.2" rx="1.3" ry="2.1" transform="rotate(25 11.3 13.2)"/><path d="M7.2 7.8 L9.9 9.5 L7.4 10.9 Z" opacity="1"/></g><g fill="none" stroke="#fdd663" stroke-width="0.6" opacity="0.9"><path d="M6.5 4 C7.5 2.5 9 1.8 10.5 2"/><path d="M0.8 9.5 C1.5 8 3 7.3 4.5 7.5"/><path d="M13.8 10.5 C14.6 12 14.4 14 13.4 15"/></g></svg>
<div class="cb" style="left:37px;top:488px"></div>
<svg class="ic" style="left:65px;top:485px" width="16" height="16" viewBox="0 0 16 16"><rect x="0" y="0" width="14" height="14" fill="#bbdefb"/><rect x="0" y="-0.2" width="14" height="2.1" fill="#3f48b0"/><rect x="2.2" y="4" width="8.8" height="8" fill="#6ea8ea"/><rect x="2.2" y="4" width="2.6" height="8" fill="#8dbdf0"/><rect x="5" y="11" width="3" height="1" fill="#2f7fe0"/><g transform="translate(7.1,16) rotate(-43)"><path d="M0 0 L2.4 -1.3 L2.4 1.3 Z" fill="#5d4a3a"/><path d="M1.4 -0.76 L2.4 -1.3 L2.4 1.3 L1.4 0.76 Z" fill="#f7c98a"/><rect x="2.4" y="-1.3" width="7.3" height="2.6" fill="#ff9800"/><rect x="2.4" y="-0.45" width="7.3" height="0.9" fill="#ffb030"/><rect x="9.7" y="-1.3" width="0.6" height="2.6" fill="#b0bec5"/><path d="M10.3 -1.3 H11 A1 1.3 0 0 1 11 1.3 H10.3 Z" fill="#e8636f"/></g></svg>
<svg class="ic" style="left:95px;top:485px" width="16" height="16" viewBox="0 0 16 16"><path d="M5.8 6.4 C5.4 5.2 4.4 4.6 3.4 4.8 C1.6 5.2 0.4 7.2 0.4 9 C0.4 10.8 1.2 12.4 2.3 12.5 C3.3 12.6 3.6 11.3 4.5 11.4 C5.4 11.5 5.6 12.6 7.7 13.4" fill="none" stroke="#7dbdf8" stroke-width="0.9" stroke-linecap="round"/><g transform="translate(9.5,15.5) rotate(-72.1)"><path d="M0 0 L2.2 -0.7 L2.2 0.7 Z" fill="#90a4ae"/><rect x="2.1" y="-1.35" width="7.7" height="2.7" fill="#7cb342"/><rect x="2.1" y="-1.35" width="7.7" height="1" fill="#9ccc65"/><rect x="9.8" y="-1.45" width="1" height="2.9" fill="#e6c62f"/><path d="M10.8 -1.45 H14.9 A1.2 1.45 0 0 1 14.9 1.45 H10.8 Z" fill="#2e6b1e"/><path d="M10.9 -2.1 H15.2" stroke="#b0bec5" stroke-width="0.7"/></g></svg>
<svg class="ic" style="left:117px;top:485px" width="16" height="16" viewBox="0 0 16 16"><circle cx="7.8" cy="8.9" r="7.3" fill="#2196f3"/><g fill="none" stroke="#fff" stroke-width="0.5" opacity="0.85"><ellipse cx="7.8" cy="8.9" rx="3.4" ry="7.3"/><path d="M7.8 1.6 V16.2 M2 4.4 H13.6 M2 13.5 H13.6"/></g><rect x="0.2" y="6.6" width="15.4" height="4.5" fill="#fff"/><text x="8.1" y="10.6" font-family="Liberation Sans, sans-serif" font-size="5.2" font-weight="bold" fill="#3545a8" stroke="#3545a8" stroke-width="0.15" text-anchor="middle" textLength="15.6" lengthAdjust="spacing">WWW</text></svg>
<span id="t_nm" class="t" style="left:92.30px;top:111.19px;font-size:11px;line-height:11px;letter-spacing:0.450px;font-weight:bold;color:#333;">Name</span>
<span id="t_wt" class="t" style="left:483.00px;top:97.19px;font-size:11px;line-height:11px;letter-spacing:0.000px;font-weight:bold;color:#333;">Work Type</span>
<span id="t_cg" class="t" style="left:694.00px;top:97.19px;font-size:11px;line-height:11px;letter-spacing:-0.257px;font-weight:bold;color:#333;">Category</span>
<span id="t_a1" class="t" style="left:491.70px;top:115.92px;font-size:12.5px;line-height:12.5px;letter-spacing:-0.225px;font-weight:bold;">All</span>
<span id="t_a2" class="t" style="left:701.60px;top:115.92px;font-size:12.5px;line-height:12.5px;letter-spacing:0.225px;font-weight:bold;">All</span>
<span id="r0n" class="t" style="left:149.00px;top:149.19px;font-size:11px;line-height:11px;letter-spacing:0.084px;">Additional Photos</span>
<span id="r0w" class="t" style="left:482.60px;top:145.19px;font-size:11px;line-height:11px;letter-spacing:-0.141px;">HEAB Installation (No Assessment)</span>
<span id="r0c" class="t" style="left:694.00px;top:145.19px;font-size:11px;line-height:11px;letter-spacing:0.400px;">Additional</span>
<span id="r1n" class="t" style="left:149.00px;top:172.19px;font-size:11px;line-height:11px;letter-spacing:0.084px;">Additional Photos</span>
<span id="r1w" class="t" style="left:482.60px;top:168.19px;font-size:11px;line-height:11px;letter-spacing:-0.141px;">HEAB Installation (No Assessment)</span>
<span id="r1c" class="t" style="left:694.00px;top:168.19px;font-size:11px;line-height:11px;letter-spacing:0.400px;">Additional</span>
<span id="r2n" class="t" style="left:149.00px;top:195.19px;font-size:11px;line-height:11px;letter-spacing:0.084px;">Additional Photos</span>
<span id="r2w" class="t" style="left:482.60px;top:191.19px;font-size:11px;line-height:11px;letter-spacing:-0.141px;">HEAB Installation (No Assessment)</span>
<span id="r2c" class="t" style="left:694.00px;top:191.19px;font-size:11px;line-height:11px;letter-spacing:0.400px;">Additional</span>
<span id="r3n" class="t" style="left:149.00px;top:218.19px;font-size:11px;line-height:11px;letter-spacing:0.084px;">Additional Photos</span>
<span id="r3w" class="t" style="left:482.60px;top:214.19px;font-size:11px;line-height:11px;letter-spacing:-0.141px;">HEAB Installation (No Assessment)</span>
<span id="r3c" class="t" style="left:694.00px;top:214.19px;font-size:11px;line-height:11px;letter-spacing:0.400px;">Additional</span>
<span id="r4n" class="t" style="left:149.00px;top:241.19px;font-size:11px;line-height:11px;letter-spacing:0.084px;">Additional Photos</span>
<span id="r4w" class="t" style="left:482.60px;top:237.19px;font-size:11px;line-height:11px;letter-spacing:-0.141px;">HEAB Installation (No Assessment)</span>
<span id="r4c" class="t" style="left:694.00px;top:237.19px;font-size:11px;line-height:11px;letter-spacing:0.400px;">Additional</span>
<span id="r5n" class="t" style="left:149.00px;top:264.19px;font-size:11px;line-height:11px;letter-spacing:0.084px;">Additional Photos</span>
<span id="r5w" class="t" style="left:482.60px;top:260.19px;font-size:11px;line-height:11px;letter-spacing:-0.141px;">HEAB Installation (No Assessment)</span>
<span id="r5c" class="t" style="left:694.00px;top:260.19px;font-size:11px;line-height:11px;letter-spacing:0.400px;">Additional</span>
<span id="r6n" class="t" style="left:149.00px;top:287.19px;font-size:11px;line-height:11px;letter-spacing:0.084px;">Additional Photos</span>
<span id="r6w" class="t" style="left:482.60px;top:283.19px;font-size:11px;line-height:11px;letter-spacing:-0.141px;">HEAB Installation (No Assessment)</span>
<span id="r6c" class="t" style="left:694.00px;top:283.19px;font-size:11px;line-height:11px;letter-spacing:0.400px;">Additional</span>
<span id="r7n" class="t" style="left:149.00px;top:310.19px;font-size:11px;line-height:11px;letter-spacing:0.084px;">Additional Photos</span>
<span id="r7w" class="t" style="left:482.60px;top:306.19px;font-size:11px;line-height:11px;letter-spacing:-0.141px;">HEAB Installation (No Assessment)</span>
<span id="r7c" class="t" style="left:694.00px;top:306.19px;font-size:11px;line-height:11px;letter-spacing:0.400px;">Additional</span>
<span id="r8n" class="t" style="left:149.00px;top:333.19px;font-size:11px;line-height:11px;letter-spacing:0.084px;">Additional Photos</span>
<span id="r8w" class="t" style="left:482.60px;top:329.19px;font-size:11px;line-height:11px;letter-spacing:-0.141px;">HEAB Installation (No Assessment)</span>
<span id="r8c" class="t" style="left:694.00px;top:329.19px;font-size:11px;line-height:11px;letter-spacing:0.400px;">Additional</span>
<span id="r9n" class="t" style="left:148.50px;top:356.19px;font-size:11px;line-height:11px;letter-spacing:-0.231px;font-style:italic;">[204670] #105 ESS/PDRS - Nomination Form</span>
<span id="r9w" class="t" style="left:482.60px;top:352.19px;font-size:11px;line-height:11px;letter-spacing:-0.141px;">HEAB Installation (No Assessment)</span>
<span id="r9c" class="t" style="left:693.10px;top:352.19px;font-size:11px;line-height:11px;letter-spacing:0.338px;">Documents</span>
<span id="r10n" class="t" style="left:148.50px;top:379.19px;font-size:11px;line-height:11px;letter-spacing:-0.209px;font-style:italic;">[204670] #36 Customer Invoice</span>
<span id="r10w" class="t" style="left:482.60px;top:375.19px;font-size:11px;line-height:11px;letter-spacing:-0.141px;">HEAB Installation (No Assessment)</span>
<span id="r10c" class="t" style="left:693.10px;top:375.19px;font-size:11px;line-height:11px;letter-spacing:0.338px;">Documents</span>
<span id="r11n" class="t" style="left:126.40px;top:402.19px;font-size:11px;line-height:11px;letter-spacing:-0.086px;font-style:italic;">[204670] #116 Plumbing Certificate of Compliance</span>
<span id="r11w" class="t" style="left:482.60px;top:398.19px;font-size:11px;line-height:11px;letter-spacing:-0.141px;">HEAB Installation (No Assessment)</span>
<span id="r11c" class="t" style="left:693.10px;top:398.19px;font-size:11px;line-height:11px;letter-spacing:0.338px;">Documents</span>
<span id="r12n" class="t" style="left:126.40px;top:425.19px;font-size:11px;line-height:11px;letter-spacing:-0.150px;font-style:italic;">[204670] #191 CCEW (Hot Water / Air Con) v2</span>
<span id="r12w" class="t" style="left:482.60px;top:421.19px;font-size:11px;line-height:11px;letter-spacing:-0.141px;">HEAB Installation (No Assessment)</span>
<span id="r12c" class="t" style="left:693.10px;top:421.19px;font-size:11px;line-height:11px;letter-spacing:0.338px;">Documents</span>
<span id="r13n" class="t" style="left:126.40px;top:448.19px;font-size:11px;line-height:11px;letter-spacing:-0.104px;font-style:italic;">[204670] #115 CCEW (Hot Water / Air Con)</span>
<span id="r13w" class="t" style="left:482.60px;top:444.19px;font-size:11px;line-height:11px;letter-spacing:-0.141px;">HEAB Installation (No Assessment)</span>
<span id="r13c" class="t" style="left:693.10px;top:444.19px;font-size:11px;line-height:11px;letter-spacing:0.338px;">Documents</span>
<span id="r14n" class="t" style="left:137.60px;top:471.19px;font-size:11px;line-height:11px;letter-spacing:-0.220px;">[204670] Invoice: Customer Signature (LEWIS JOB)</span>
<span id="r14w" class="t" style="left:482.60px;top:467.19px;font-size:11px;line-height:11px;letter-spacing:-0.141px;">HEAB Installation (No Assessment)</span>
<span id="r14c" class="t" style="left:693.10px;top:467.19px;font-size:11px;line-height:11px;letter-spacing:-0.100px;">Signatures</span>
<span id="r15n" class="t" style="left:137.60px;top:494.19px;font-size:11px;line-height:11px;letter-spacing:-0.097px;">[204670] (Form #105) Work Signoff: Customer Signature (John Smith)</span>
<span id="r15w" class="t" style="left:482.60px;top:490.19px;font-size:11px;line-height:11px;letter-spacing:-0.141px;">HEAB Installation (No Assessment)</span>
<span id="r15c" class="t" style="left:693.10px;top:490.19px;font-size:11px;line-height:11px;letter-spacing:-0.100px;">Signatures</span>
</div></div>
<span id="t_fl" class="t" style="left:31.50px;top:27.75px;font-size:12.7px;line-height:12.7px;letter-spacing:0.000px;transform:scaleX(0.8169);transform-origin:0 0;font-weight:bold;color:#fff;-webkit-text-stroke:0.35px #fff;">FILE LIST</span>
<span id="t_pv" class="t" style="left:735.30px;top:27.75px;font-size:12.7px;line-height:12.7px;letter-spacing:0.000px;transform:scaleX(0.8727);transform-origin:0 0;font-weight:bold;color:#fff;-webkit-text-stroke:0.35px #fff;">PREVIEW</span>
<span id="t_sa" class="t" style="left:27.00px;top:64.19px;font-size:11px;line-height:11px;letter-spacing:-0.038px;">Show Archived</span>
<span id="t_b1" class="t" style="left:145.30px;top:62.92px;font-size:12.5px;line-height:12.5px;letter-spacing:0.000px;transform:scaleX(0.8921);transform-origin:0 0;color:#fff;">SHOW LOCATIONS</span>
<span id="t_b2" class="t" style="left:284.10px;top:62.92px;font-size:12.5px;line-height:12.5px;letter-spacing:0.000px;transform:scaleX(0.8506);transform-origin:0 0;color:#fff;">UPLOAD FILES...</span>
<span id="t_ws" class="t" style="left:595.10px;top:62.34px;font-size:12px;line-height:12px;letter-spacing:0.000px;transform:scaleX(0.8913);transform-origin:0 0;color:#a0a0a0;">With selected files ...</span>
<svg class="ic" style="left:0;top:0;mix-blend-mode:multiply" width="824" height="528" viewBox="0 0 824 528">
<path d="M173.8 491 L173.8 513.5 C174 515 176 515.8 180.5 516.2 C186 516.8 191 516.9 196 516.8 C201 516.7 206 516.6 211.4 516.2 C217 515.7 222 515 226.9 514.2 C231 513.4 235.5 511.5 237.2 509 C238.8 507.5 240 506.8 240 505 L240 489.5 C240 487.5 238.5 485.8 236.1 484.3 C233.5 482.6 230 481.9 226.9 481.7 C215 481 203 481 191.8 481.4 C189 481.6 187.5 482 185.6 482.7 C182 484.2 179.5 486.5 177.4 488.4 C176 489.5 174.3 489.8 173.8 491 Z" fill="#ffe900"/></svg>
<svg class="ic" style="left:0;top:0" width="824" height="528" viewBox="0 0 824 528">
<path d="M124.8 452.1 C122.6 452.5 115.5 453.0 111.4 454.4 C107.3 455.8 103.7 457.8 100.4 460.7 C97.1 463.6 94.1 467.8 91.8 471.7 C89.5 475.6 87.6 480.4 86.6 484.3 C85.6 488.2 85.5 491.6 86.0 495.3 C86.5 499.0 87.8 503.0 89.4 506.3 C91.0 509.6 93.1 512.5 95.7 514.9 C98.3 517.2 101.4 519.0 105.1 520.4 C108.8 521.8 113.5 523.0 117.7 523.1 C121.9 523.2 126.4 522.7 130.3 521.2 C134.2 519.7 137.9 517.1 141.3 514.1 C144.7 511.1 148.4 506.8 150.7 503.1 C153.0 499.4 154.3 495.8 155.1 492.1 C155.9 488.4 155.9 484.8 155.4 481.1 C154.9 477.4 153.9 473.5 152.3 470.1 C150.7 466.7 148.6 463.2 146.0 460.7 C143.4 458.2 140.0 456.5 136.6 455.2 C133.2 453.9 128.8 453.2 125.6 452.9 C122.4 452.6 119.0 453.1 117.7 453.2" fill="none" stroke="#e01b1f" stroke-width="4.3" stroke-linecap="round" stroke-linejoin="round"/></svg>
</body></html>
